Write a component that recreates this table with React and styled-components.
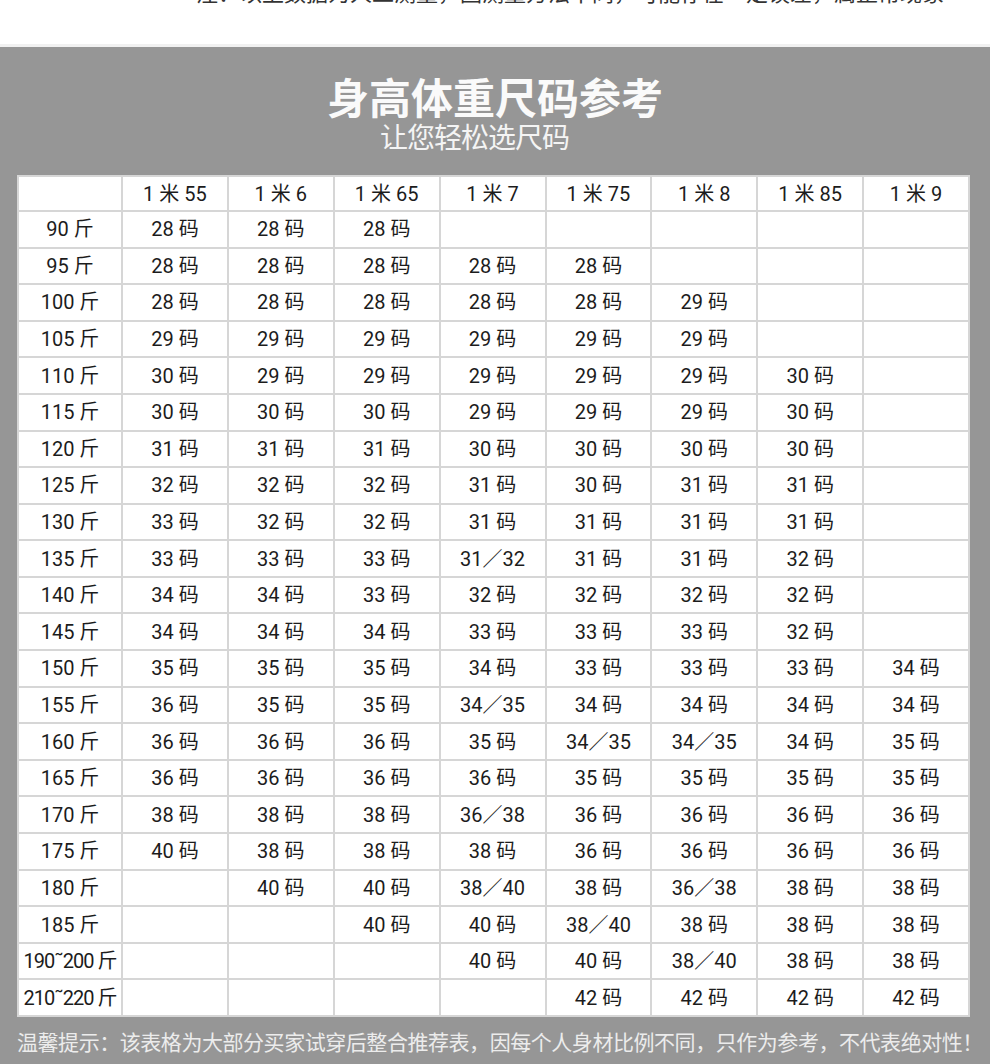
import React from 'react';
import styled, { createGlobalStyle } from 'styled-components';

const GlobalStyle = createGlobalStyle`
  html, body {
    margin: 0;
    padding: 0;
    background: #969696;
  }
  body {
    font-family: Roboto, "Noto Sans CJK SC", sans-serif;
  }
`;

const Page = styled.div`
  width: 990px;
  height: 1064px;
  overflow: hidden;
  display: flex;
  flex-direction: column;
`;

const TopBand = styled.div`
  height: 44px;
  background: #fff;
  border-bottom: 3px solid #f1f1f1;
  overflow: hidden;
`;

const TopNote = styled.div`
  margin-top: -20px;
  padding-left: 196px;
  font-family: "Noto Sans CJK SC", sans-serif;
  font-size: 22px;
  line-height: 22px;
  color: #333;
  white-space: nowrap;
`;

const Panel = styled.div`
  flex: 1;
  background: #969696;
  padding: 26px 20px 0 17px;
  display: flex;
  flex-direction: column;
`;

const Title = styled.h1`
  margin: 0;
  text-align: center;
  font-family: "Noto Sans CJK SC", sans-serif;
  font-weight: 700;
  font-size: 42px;
  line-height: 46px;
  color: #fafafa;
  padding-left: 3px;
`;

const Subtitle = styled.div`
  margin: 2px 0 0 0;
  text-align: center;
  font-family: "Noto Sans CJK SC", sans-serif;
  font-size: 28px;
  line-height: 30px;
  color: #f4f4f4;
  letter-spacing: -1px;
  padding-right: 38px;
`;

const Table = styled.div`
  margin-top: 24px;
  width: 953px;
  height: 842px;
  box-sizing: border-box;
  display: grid;
  grid-template-columns: 102px repeat(8, 1fr);
  grid-template-rows: 33px repeat(22, 1fr);
  gap: 2px;
  padding: 2px;
  background: #d6d6d6;
`;

const Cell = styled.div`
  background: #fff;
  display: flex;
  align-items: center;
  justify-content: center;
  padding-bottom: 3px;
  box-sizing: border-box;
  font-family: Roboto, "Noto Sans CJK SC", sans-serif;
  font-size: 20px;
  letter-spacing: ${(p) => (p.$tight ? '-1px' : '0')};
  color: #1c1c1c;
  white-space: nowrap;
`;

const Footer = styled.div`
  margin-top: 9px;
  font-family: "Noto Sans CJK SC", sans-serif;
  font-size: 21px;
  line-height: 30px;
  color: #ececec;
  white-space: nowrap;
  letter-spacing: -0.45px;
`;

const heights = ['1 米 55', '1 米 6', '1 米 65', '1 米 7', '1 米 75', '1 米 8', '1 米 85', '1 米 9'];

const rows = [
  ['90 斤', [28, 28, 28, '', '', '', '', '']],
  ['95 斤', [28, 28, 28, 28, 28, '', '', '']],
  ['100 斤', [28, 28, 28, 28, 28, 29, '', '']],
  ['105 斤', [29, 29, 29, 29, 29, 29, '', '']],
  ['110 斤', [30, 29, 29, 29, 29, 29, 30, '']],
  ['115 斤', [30, 30, 30, 29, 29, 29, 30, '']],
  ['120 斤', [31, 31, 31, 30, 30, 30, 30, '']],
  ['125 斤', [32, 32, 32, 31, 30, 31, 31, '']],
  ['130 斤', [33, 32, 32, 31, 31, 31, 31, '']],
  ['135 斤', [33, 33, 33, '31／32', 31, 31, 32, '']],
  ['140 斤', [34, 34, 33, 32, 32, 32, 32, '']],
  ['145 斤', [34, 34, 34, 33, 33, 33, 32, '']],
  ['150 斤', [35, 35, 35, 34, 33, 33, 33, 34]],
  ['155 斤', [36, 35, 35, '34／35', 34, 34, 34, 34]],
  ['160 斤', [36, 36, 36, 35, '34／35', '34／35', 34, 35]],
  ['165 斤', [36, 36, 36, 36, 35, 35, 35, 35]],
  ['170 斤', [38, 38, 38, '36／38', 36, 36, 36, 36]],
  ['175 斤', [40, 38, 38, 38, 36, 36, 36, 36]],
  ['180 斤', ['', 40, 40, '38／40', 38, '36／38', 38, 38]],
  ['185 斤', ['', '', 40, 40, '38／40', 38, 38, 38]],
  ['190˜200 斤', ['', '', '', 40, 40, '38／40', 38, 38]],
  ['210˜220 斤', ['', '', '', '', 42, 42, 42, 42]],
];

const fmt = (v) => (v === '' ? '' : typeof v === 'number' ? `${v} 码` : v);

export default function App() {
  return (
    <Page>
      <GlobalStyle />
      <TopBand>
        <TopNote>注：以上数据为人工测量，因测量方法不同，可能存在一定误差，属正常现象</TopNote>
      </TopBand>
      <Panel>
        <Title>身高体重尺码参考</Title>
        <Subtitle>让您轻松选尺码</Subtitle>
        <Table>
          <Cell />
          {heights.map((h) => (
            <Cell key={h}>{h}</Cell>
          ))}
          {rows.map(([label, vals]) => (
            <React.Fragment key={label}>
              <Cell $tight={label.length > 6}>{label}</Cell>
              {vals.map((v, i) => (
                <Cell key={i}>{fmt(v)}</Cell>
              ))}
            </React.Fragment>
          ))}
        </Table>
        <Footer>
          温馨提示：该表格为大部分买家试穿后整合推荐表，因每个人身材比例不同，只作为参考，不代表绝对性！
        </Footer>
      </Panel>
    </Page>
  );
}
